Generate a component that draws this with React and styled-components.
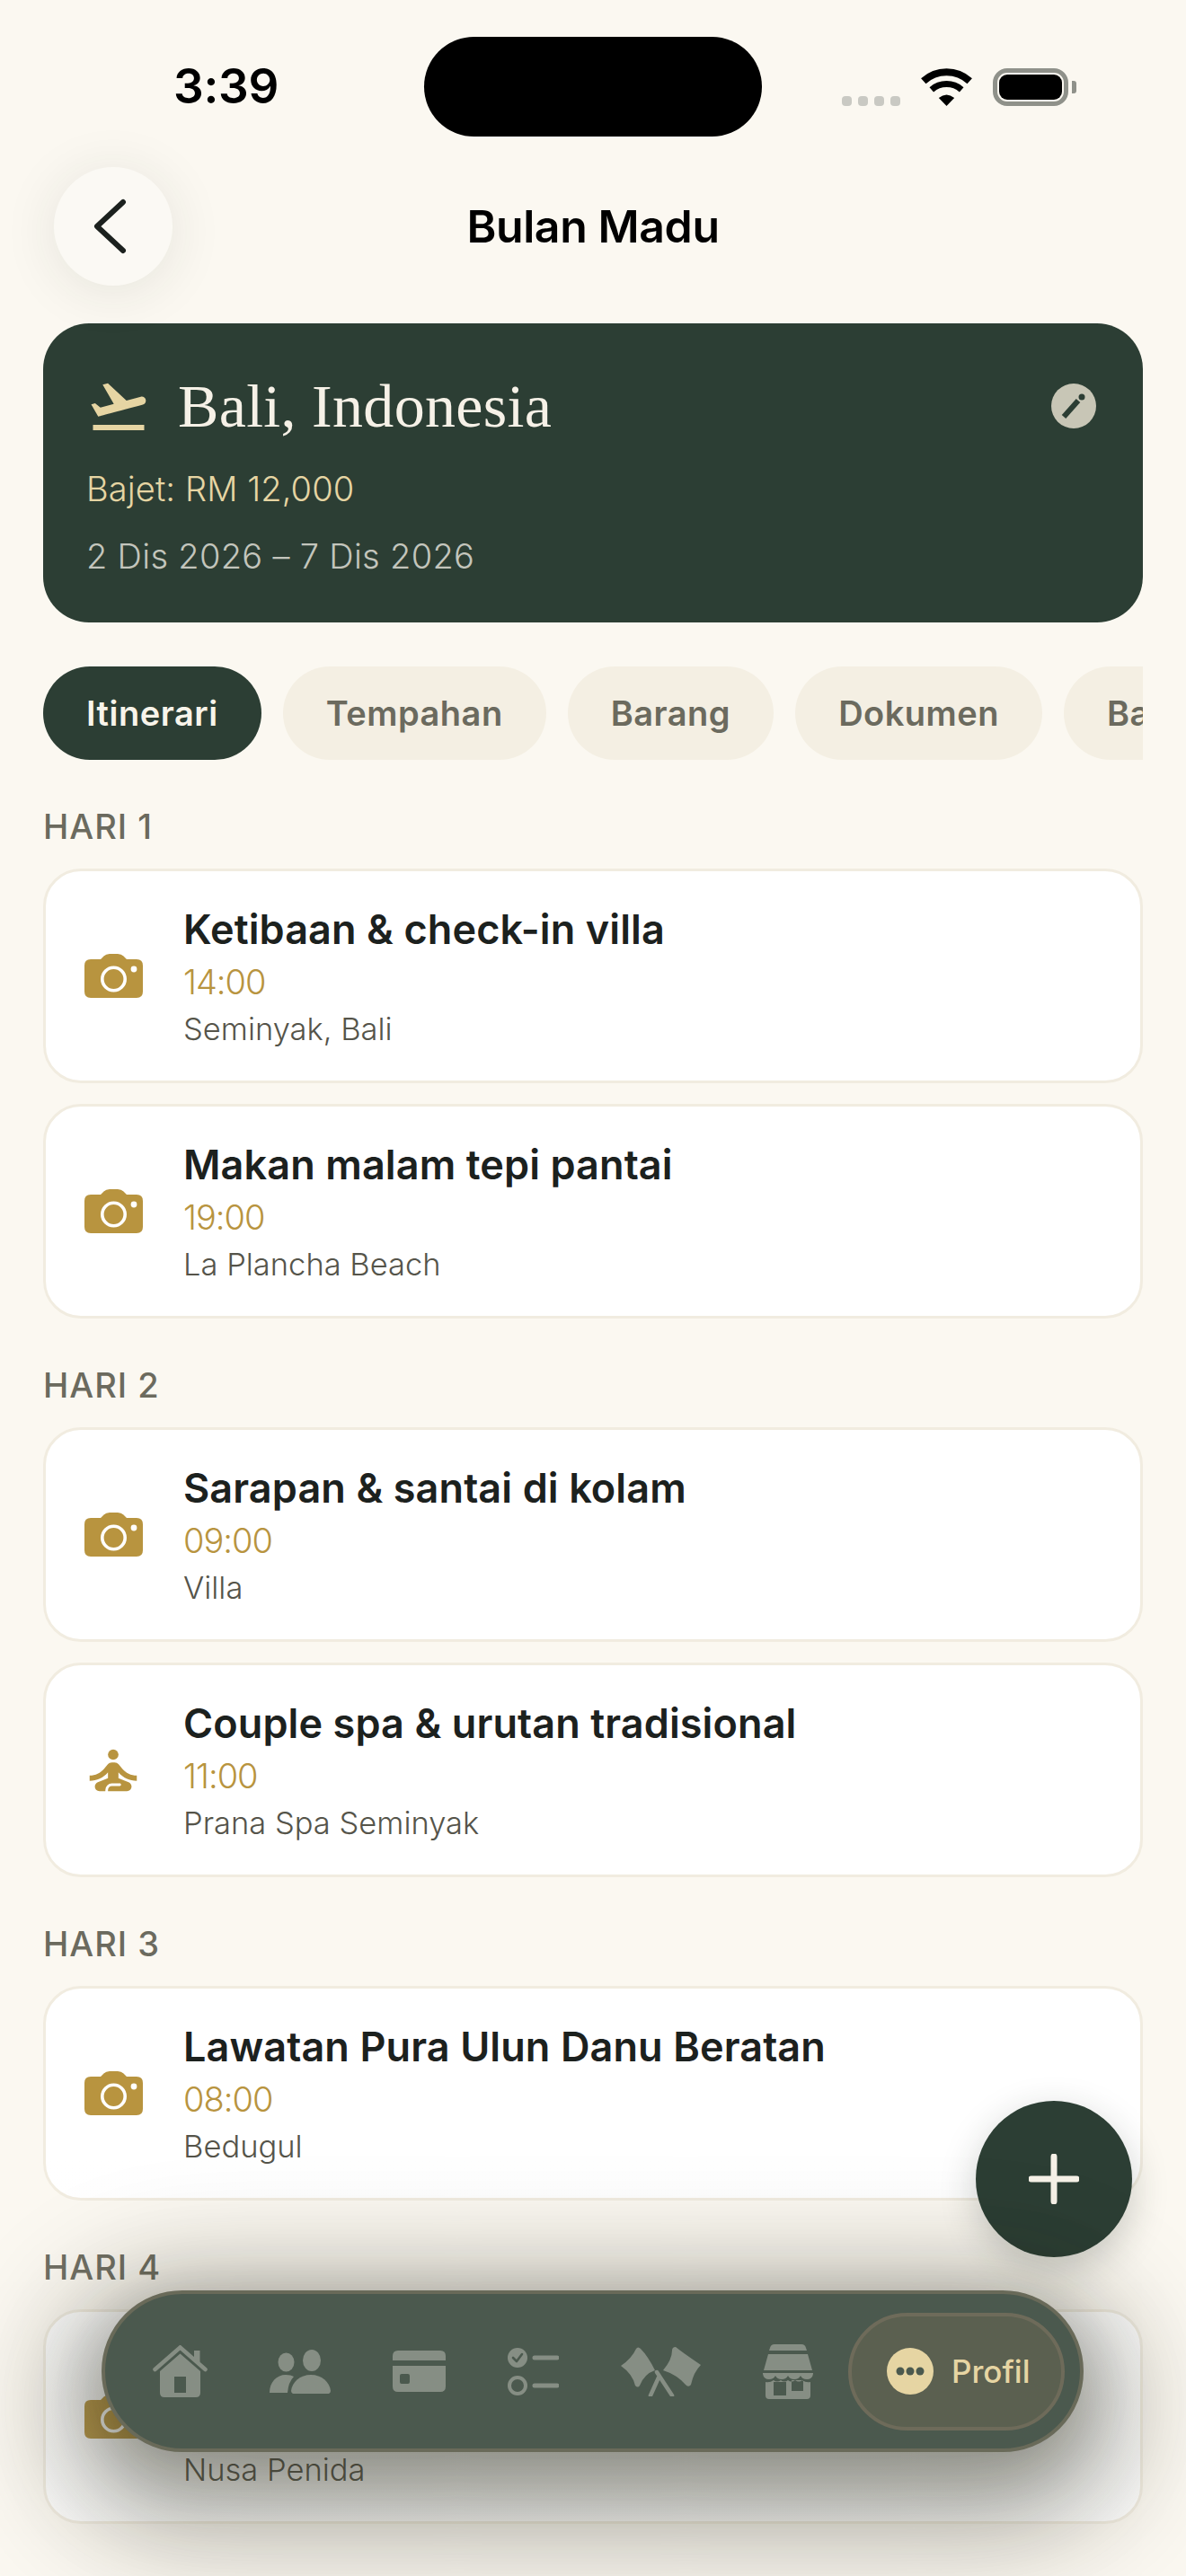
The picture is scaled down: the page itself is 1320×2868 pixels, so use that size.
import React from 'react';
import styled, { createGlobalStyle } from 'styled-components';
import { MdFlightTakeoff, MdSelfImprovement } from 'react-icons/md';

const Global = createGlobalStyle`
  html, body { margin: 0; padding: 0; background: #FBF8F1; }
  * { box-sizing: border-box; }
`;

const sans = `"Inter", "Liberation Sans", sans-serif`;

const Screen = styled.div`
  position: relative;
  width: 1320px;
  height: 2868px;
  overflow: hidden;
  background: #FBF8F1;
  font-family: ${sans};
  color: #1C211E;
`;
const StatusBar = styled.div`
  display: grid;
  grid-template-columns: 1fr 376px 1fr;
  align-items: center;
  height: 186px;
  padding: 41px 0 34px;
`;
const Clock = styled.div`
  padding-left: 193px;
  font-size: 53px;
  font-weight: 600;
  letter-spacing: -0.3px;
  color: #000;
  line-height: 1;
`;
const Island = styled.div`
  height: 111px;
  border-radius: 56px;
  background: #000;
`;
const StatusIcons = styled.div`
  display: flex;
  justify-content: flex-end;
  align-items: flex-end;
  padding-right: 122px;
  gap: 23px;
`;
const Dots = styled.div`
  display: flex;
  gap: 7px;
`;
const Dot = styled.span`
  width: 11px;
  height: 11px;
  border-radius: 4px;
  background: #C9C9C3;
`;
const Battery = styled.div`
  position: relative;
  width: 84px;
  height: 42px;
  border: 5px solid #8F918A;
  border-radius: 16px;
  margin-right: 9px;
  &::after {
    content: '';
    position: absolute;
    right: -14px;
    top: 9px;
    width: 5px;
    height: 14px;
    border-radius: 0 3px 3px 0;
    background: #8F918A;
  }
`;
const BatteryFill = styled.div`
  position: absolute;
  inset: 2px;
  border-radius: 9px;
  background: #000;
`;

const Content = styled.div`
  padding: 0 48px;
`;
const Header = styled.header`
  display: grid;
  grid-template-columns: 1fr auto 1fr;
  align-items: center;
  height: 132px;
`;
const BackButton = styled.button`
  width: 132px;
  height: 132px;
  margin-left: 12px;
  padding: 0 9px 0 0;
  border: 0;
  border-radius: 50%;
  background: #FBF9F4;
  box-shadow: 0 6px 60px rgba(40, 45, 35, 0.10);
  display: flex;
  align-items: center;
  justify-content: center;
`;
const Title = styled.h1`
  margin: 0;
  font-size: 50px;
  font-weight: 600;
  letter-spacing: -0.4px;
  color: #000;
`;
const Hero = styled.section`
  margin-top: 42px;
  height: 333px;
  padding: 53px 48px 0 48px;
  border-radius: 51px;
  background: #2C3E34;
`;
const HeroTop = styled.div`
  display: flex;
  align-items: center;
  gap: 30px;
  height: 78px;
`;
const HeroTitle = styled.h2`
  flex: 1;
  margin: 0;
  font-family: "Liberation Serif", serif;
  font-size: 68px;
  font-weight: 400;
  letter-spacing: 0.3px;
  color: #F6F1E7;
`;
const EditButton = styled.span`
  width: 50px;
  height: 50px;
  margin-right: 4px;
  border-radius: 50%;
  background: #C8C6B6;
  display: flex;
  align-items: center;
  justify-content: center;
`;
const Budget = styled.div`
  margin-top: 28px;
  font-size: 38px;
  font-weight: 300;
  line-height: 50px;
  letter-spacing: 0.1px;
  color: #E6D5A3;
`;
const Dates = styled.div`
  margin-top: 25px;
  font-size: 38px;
  font-weight: 300;
  line-height: 50px;
  letter-spacing: 0.3px;
  color: #C3C5BC;
`;
const Tabs = styled.nav`
  display: flex;
  gap: 24px;
  margin-top: 49px;
  margin-bottom: 2px;
  overflow: hidden;
`;
const Tab = styled.span`
  flex: none;
  height: 104px;
  padding: 0 48px;
  border-radius: 52px;
  display: flex;
  align-items: center;
  font-size: 38px;
  font-weight: 600;
  letter-spacing: 0.5px;
  background: ${p => (p.$active ? '#2C3E34' : '#F4EFE3')};
  color: ${p => (p.$active ? '#F8F4EA' : '#6B6A5E')};
`;
const DayLabel = styled.h3`
  margin: 49px 0 22px;
  font-size: 38px;
  line-height: 50px;
  font-weight: 500;
  letter-spacing: 1px;
  color: #6B6A5E;
`;
const Cards = styled.div`
  display: flex;
  flex-direction: column;
  gap: 23px;
`;
const Card = styled.article`
  display: flex;
  align-items: center;
  height: 239px;
  padding-left: 40px;
  border: 3px solid #F1ECE0;
  border-radius: 42px;
  background: #fff;
`;
const CardIcon = styled.div`
  flex: none;
  width: 70px;
  display: flex;
  justify-content: center;
  color: #B8943F;
`;
const CardBody = styled.div`
  margin-left: 43px;
  padding-top: 4px;
`;
const CardTitle = styled.div`
  font-size: 45px;
  line-height: 58px;
  font-weight: 600;
  letter-spacing: 0.1px;
  color: #1C211E;
`;
const CardTime = styled.div`
  font-size: 38px;
  font-weight: 300;
  line-height: 50px;
  letter-spacing: -1px;
  margin-top: 4px;
  color: #B8943F;
`;
const CardPlace = styled.div`
  font-size: 34.5px;
  font-weight: 300;
  line-height: 50px;
  margin-top: 3px;
  color: #55544A;
`;

const Fade = styled.div`
  position: absolute;
  left: 0;
  right: 0;
  bottom: 0;
  height: 470px;
  pointer-events: none;
  background: linear-gradient(to bottom, rgba(251, 248, 241, 0), rgba(251, 248, 241, 0.12) 70%);
`;
const Fab = styled.button`
  position: absolute;
  left: 1086px;
  top: 2339px;
  width: 174px;
  height: 174px;
  padding: 0;
  border: 0;
  border-radius: 50%;
  background: #2C3E34;
  box-shadow: 0 12px 40px rgba(30, 40, 30, 0.22);
  display: flex;
  align-items: center;
  justify-content: center;
`;
const Dock = styled.nav`
  position: absolute;
  left: 113px;
  top: 2550px;
  width: 1093px;
  height: 180px;
  padding: 0 17px 0 53px;
  border: 4px solid #696A59;
  border-radius: 90px;
  background: #4B594E;
  box-shadow:
    0 16px 60px rgba(24, 26, 10, 0.12),
    0 34px 110px 16px rgba(24, 26, 10, 0.3),
    0 40px 130px 64px rgba(24, 26, 10, 0.2);
  display: flex;
  align-items: center;
  justify-content: space-between;
`;
const DockIcons = styled.div`
  display: flex;
  align-items: center;
  gap: 69px;
  color: #868E84;
`;
const ProfilePill = styled.div`
  width: 241px;
  height: 131px;
  padding-left: 39px;
  border: 4px solid #6E6B5A;
  border-radius: 66px;
  background: #5B6050;
  display: flex;
  align-items: center;
  gap: 20px;
`;
const ProfileDot = styled.span`
  width: 52px;
  height: 52px;
  border-radius: 50%;
  background: #E6D5A3;
  display: flex;
  align-items: center;
  justify-content: center;
`;
const ProfileText = styled.span`
  font-size: 35px;
  font-weight: 500;
  color: #E6D5A3;
`;

const Camera = () => (
  <svg width="65" height="49" viewBox="0 0 65 49">
    <path fill="currentColor" d="M7 6h11l3.5-3.5Q24 0 28 0h9q4 0 6.500 2.500L47 6h11q7 0 7 7v29q0 7-7 7H7q-7 0-7-7V13q0-7 7-7z" />
    <circle cx="32.500" cy="28" r="12.700" fill="none" stroke="#fff" strokeWidth="3.600" />
    <circle cx="55" cy="17" r="3.400" fill="#fff" />
  </svg>
);
const Wifi = () => (
  <svg width="57" height="42" viewBox="0 0 57 42" fill="none" stroke="#000">
    <path strokeWidth="8" d="M2.800 14.300A38 38 0 0 1 54.200 14.300" />
    <path strokeWidth="7" d="M11.800 23.800A25.500 25.500 0 0 1 45.200 23.800" />
    <path fill="#000" stroke="none" d="M28.500 42L19.800 33Q28.500 26 37.200 33Z" />
  </svg>
);
const Home = () => (
  <svg width="61" height="58" viewBox="0 0 61 58" fill="currentColor">
    <path d="M30.500 9.500L8 29v24q0 5 5 5h35q5 0 5-5V29zM24 35h13v18H24z" fillRule="evenodd" />
    <path fill="none" stroke="currentColor" strokeWidth="4.500" strokeLinecap="round" d="M2.500 27L30.500 2.500 58.500 27" />
    <path d="M46 6h6.500v14L46 14z" />
  </svg>
);
const People = () => (
  <svg width="68" height="49" viewBox="0 0 68 49" fill="currentColor">
    <ellipse cx="18.500" cy="14" rx="9" ry="10.500" />
    <ellipse cx="47" cy="12" rx="10" ry="12" />
    <path d="M0 48C0 36 8 28 18 28q6 0 9 2-6 6-7 18z" />
    <path d="M26 49q-2-1-2-3c1-10 10-18 22-18s21 8 22 18q0 2-2 3z" />
  </svg>
);
const CardGlyph = () => (
  <svg width="59" height="46" viewBox="0 0 59 46" fill="currentColor">
    <path d="M0 11V6q0-6 6-6h47q6 0 6 6v5z" />
    <path fillRule="evenodd" d="M0 17h59v23q0 6-6 6H6q-6 0-6-6zM8 28q0-2 2-2h7q2 0 2 2v7q0 2-2 2h-7q-2 0-2-2z" />
  </svg>
);
const Checklist = () => (
  <svg width="57" height="54" viewBox="0 0 57 54" fill="none">
    <circle cx="11" cy="12" r="11" fill="currentColor" />
    <path d="M6 12l4 4 6-8" stroke="#4B594E" strokeWidth="2.600" strokeLinecap="round" strokeLinejoin="round" />
    <circle cx="11" cy="43" r="9" stroke="currentColor" strokeWidth="4" />
    <path d="M30 12h25M30 43h25" stroke="currentColor" strokeWidth="5" strokeLinecap="round" />
  </svg>
);
const Flags = () => (
  <svg width="89" height="55" viewBox="0 0 89 55" fill="currentColor">
    <path d="M0 21Q12 13 17 2q2-3 5 0 8 8 16 24-12 4-17 17-2 3-5 0Q13 30 0 21z" />
    <path d="M47 26q10-12 10-22 0-4 4-4 10 8 28 20-8 8-11 22-2 3-5 1-10-12-26-17z" />
    <path fill="none" stroke="currentColor" strokeWidth="4.500" strokeLinecap="round" d="M40 28L57 54M42 34L33 54" />
  </svg>
);
const Store = () => (
  <svg width="56" height="61" viewBox="0 0 56 61" fill="currentColor">
    <path d="M8 4q1-4 5-4h30q4 0 5 4l1 3H7z" />
    <path d="M6 11h44l5 18H1z" />
    <path d="M0 32h56v1q-1 6-7 6-5 0-7-4-2 4-7 4t-7-4q-2 4-7 4t-7-4q-2 4-7 4-6 0-7-6z" />
    <path fillRule="evenodd" d="M3 42q5 1 9-2 4 3 8 0 4 3 8 0 4 3 8 0 4 3 8 0 4 3 9 2v15q0 4-4 4H7q-4 0-4-4zM12 42h14v15H12zM32 40h13v12H32z" />
  </svg>
);

const days = [
  { label: 'HARI 1', items: [
    { t: 'Ketibaan & check-in villa', h: '14:00', p: 'Seminyak, Bali' },
    { t: 'Makan malam tepi pantai', h: '19:00', p: 'La Plancha Beach' },
  ] },
  { label: 'HARI 2', items: [
    { t: 'Sarapan & santai di kolam', h: '09:00', p: 'Villa' },
    { t: 'Couple spa & urutan tradisional', h: '11:00', p: 'Prana Spa Seminyak', spa: true },
  ] },
  { label: 'HARI 3', items: [
    { t: 'Lawatan Pura Ulun Danu Beratan', h: '08:00', p: 'Bedugul' },
  ] },
  { label: 'HARI 4', items: [
    { t: 'Snorkeling di Nusa Penida', h: '09:00', p: 'Nusa Penida' },
  ] },
];

export default function App() {
  return (
    <Screen>
      <Global />
      <StatusBar>
        <Clock>3:39</Clock>
        <Island />
        <StatusIcons>
          <Dots><Dot /><Dot /><Dot /><Dot /></Dots>
          <Wifi />
          <Battery><BatteryFill /></Battery>
        </StatusIcons>
      </StatusBar>
      <Content>
        <Header>
          <BackButton aria-label="Kembali">
            <svg width="40" height="62" viewBox="0 0 40 62" fill="none">
              <path d="M35 4L6 31l29 27" stroke="#1C211E" strokeWidth="6" strokeLinecap="round" strokeLinejoin="round" />
            </svg>
          </BackButton>
          <Title>Bulan Madu</Title>
        </Header>
        <Hero>
          <HeroTop>
            <MdFlightTakeoff size={72} color="#E6D5A3" />
            <HeroTitle>Bali, Indonesia</HeroTitle>
            <EditButton>
              <svg width="30" height="30" viewBox="0 0 30 30">
                <path d="M4 27L20 9" stroke="#2C3E34" strokeWidth="6" fill="none" />
                <circle cx="24" cy="5" r="3.500" fill="#2C3E34" />
              </svg>
            </EditButton>
          </HeroTop>
          <Budget>Bajet: RM 12,000</Budget>
          <Dates>2 Dis 2026 – 7 Dis 2026</Dates>
        </Hero>
        <Tabs>
          <Tab $active>Itinerari</Tab>
          <Tab>Tempahan</Tab>
          <Tab>Barang</Tab>
          <Tab>Dokumen</Tab>
          <Tab>Bajet</Tab>
        </Tabs>
        {days.map(d => (
          <section key={d.label}>
            <DayLabel>{d.label}</DayLabel>
            <Cards>
              {d.items.map(i => (
                <Card key={i.t}>
                  <CardIcon>{i.spa ? <MdSelfImprovement size={80} /> : <Camera />}</CardIcon>
                  <CardBody>
                    <CardTitle>{i.t}</CardTitle>
                    <CardTime>{i.h}</CardTime>
                    <CardPlace>{i.p}</CardPlace>
                  </CardBody>
                </Card>
              ))}
            </Cards>
          </section>
        ))}
      </Content>
      <Fade />
      <Fab aria-label="Tambah">
        <svg width="56" height="56" viewBox="0 0 56 56">
          <path d="M28 3v50M3 28h50" stroke="#F6F1E7" strokeWidth="7" strokeLinecap="round" />
        </svg>
      </Fab>
      <Dock>
        <DockIcons>
          <Home /><People /><CardGlyph /><Checklist /><Flags /><Store />
        </DockIcons>
        <ProfilePill>
          <ProfileDot>
            <svg width="32" height="10" viewBox="0 0 32 10" fill="#4B594E">
              <circle cx="5" cy="5" r="4.500" /><circle cx="16" cy="5" r="4.500" /><circle cx="27" cy="5" r="4.500" />
            </svg>
          </ProfileDot>
          <ProfileText>Profil</ProfileText>
        </ProfilePill>
      </Dock>
    </Screen>
  );
}
